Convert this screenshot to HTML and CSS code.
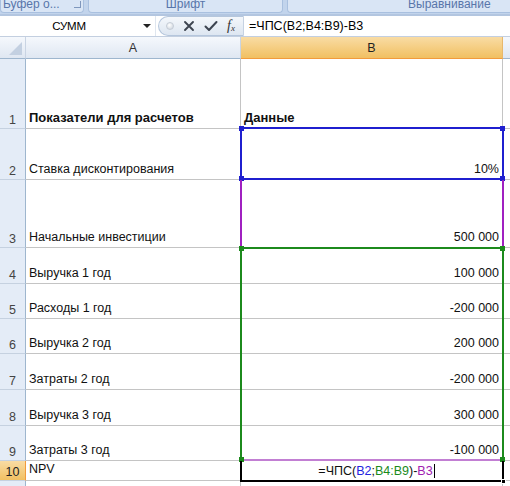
FILE: index.html
```html
<!DOCTYPE html>
<html>
<head>
<meta charset="utf-8">
<link rel="stylesheet" href="styles.css">
</head>
<body>
<div class="ribbon">
  <div class="grp g1"><span class="glabel">Буфер о...</span><span class="launch"></span></div>
  <div class="grp g2"><span class="glabel">Шрифт</span></div>
  <div class="grp g3"><span class="glabel">Выравнивание</span></div>
</div>
<div class="fbar">
  <div class="namebox"><span class="name">СУММ</span><span class="arrow"></span></div>
  <div class="capsule">
    <span class="dot"></span>
    <svg class="ico" width="12" height="12" viewBox="0 0 12 12"><path d="M2 2 L10 10 M10 2 L2 10" stroke="#3d4450" stroke-width="1.9" stroke-linecap="round"/></svg>
    <svg class="ico" width="14" height="12" viewBox="0 0 14 12"><path d="M1.5 6.5 L5 10 L12.5 2" stroke="#3d4450" stroke-width="2" fill="none" stroke-linecap="round" stroke-linejoin="round"/></svg>
    <span class="fx">f<sub>x</sub></span>
  </div>
  <div class="formula">=ЧПС(B2;B4:B9)-B3</div>
</div>
<div class="wrap">
  <div class="sheet grid">
    <div class="corner"><span class="tri"></span></div>
    <div class="ch">A</div>
    <div class="ch sel">B</div>
    <div class="ch rest"></div>

    <div class="rh">1</div><div class="c bold">Показатели для расчетов</div><div class="c bold">Данные</div><div class="x"></div>
    <div class="rh">2</div><div class="c">Ставка дисконтирования</div><div class="c num">10%</div><div class="x"></div>
    <div class="rh">3</div><div class="c">Начальные инвестиции</div><div class="c num">500 000</div><div class="x"></div>
    <div class="rh">4</div><div class="c">Выручка 1 год</div><div class="c num">100 000</div><div class="x"></div>
    <div class="rh">5</div><div class="c">Расходы 1 год</div><div class="c num">-200 000</div><div class="x"></div>
    <div class="rh">6</div><div class="c">Выручка 2 год</div><div class="c num">200 000</div><div class="x"></div>
    <div class="rh">7</div><div class="c">Затраты 2 год</div><div class="c num">-200 000</div><div class="x"></div>
    <div class="rh">8</div><div class="c">Выручка 3 год</div><div class="c num">300 000</div><div class="x"></div>
    <div class="rh">9</div><div class="c">Затраты 3 год</div><div class="c num">-100 000</div><div class="x"></div>
    <div class="rh sel">10</div><div class="c top">NPV</div><div class="c edit"><span>=ЧПС(<b class="cb">B2</b>;<b class="cg">B4:B9</b>)-<b class="cp">B3</b></span><span class="caret"></span></div><div class="x"></div>
    <div class="rh"></div><div class="c"></div><div class="c"></div><div class="x"></div>
  </div>
  <div class="overlay grid">
    <div class="rng r-blue"><i class="h tl"></i><i class="h tr"></i><i class="h bl"></i><i class="h br"></i></div>
    <div class="rng r-purple"><i class="h bl"></i><i class="h br"></i></div>
    <div class="rng r-green"><i class="h tl"></i><i class="h tr"></i><i class="h bl"></i><i class="h br"></i></div>
    <div class="rng r-active"><i class="fill"></i></div>
  </div>
</div>
</body>
</html>
```
FILE: styles.css
```css
* { box-sizing: border-box; }
html, body { margin: 0; padding: 0; background: #fff; }
body {
  width: 510px; height: 486px; overflow: hidden;
  font-family: "Liberation Sans", Arial, sans-serif; font-size: 12.5px; color: #000;
}
.ribbon {
  height: 16px; background: #c2d4ec; display: flex; gap: 4px;
  border-bottom: 2px solid #b3c6e0; overflow: hidden;
}
.grp {
  height: 13px; background: #d9e5f5; border: 1px solid #a9c0df; border-top: none;
  border-radius: 0 0 4px 4px; display: flex; justify-content: center;
  overflow: hidden;
}
.g1 { width: 84px; justify-content: flex-start; padding-left: 2px; }
.g2 { width: 195px; }
.g3 { flex: 1; margin-right: -4px; padding-left: 120px; justify-content: flex-start; }
.glabel {
  font-size: 12px; color: #5876aa; line-height: 13px; margin-top: -2px; white-space: nowrap;
}
.launch {
  width: 7px; height: 7px; border-right: 1px solid #7f97bd; border-bottom: 1px solid #7f97bd;
  margin: 1px 0 0 14px;
}
.fbar {
  height: 21px; display: flex; align-items: center; background: #fff;
  border-bottom: 1px solid #c3cfe0;
}
.namebox {
  width: 156px; height: 20px; display: flex; align-items: center;
  border-right: 1px solid #dfe6ef;
}
.name { width: 140px; text-align: center; font-size: 11.5px; letter-spacing: -0.2px; padding-right: 2px; }
.arrow {
  width: 0; height: 0; border-left: 4px solid transparent; border-right: 4px solid transparent;
  border-top: 4px solid #222; margin-left: 3px;
}
.capsule {
  width: 86px; height: 20px; border-radius: 10px 0 0 10px;
  background: linear-gradient(#f4f7fb, #dde6f1); border: 1px solid #b5c6dc; border-right: 1px solid #c6d2e2;
  display: flex; align-items: center; padding-left: 7px; gap: 9px; margin-left: 2px;
}
.dot { width: 8px; height: 8px; border-radius: 50%; background: radial-gradient(circle at 40% 35%, #ffffff, #c8d0da); border: 1px solid #c5ccd6; }
.ico { display: block; }
.fx { font-family: "Liberation Serif", serif; font-style: italic; font-size: 14px; color: #333; line-height: 14px; }
.fx sub { font-size: 9px; vertical-align: baseline; position: relative; top: 1px; }
.formula { padding-left: 5px; font-size: 12.5px; }

.wrap { position: relative; }
.grid {
  display: grid;
  grid-template-columns: 26px 215px 262px 7px;
  grid-template-rows: 22px 70px 51px 68px 36px 35px 35px 36px 36px 35px 20px 10px;
}
.overlay { position: absolute; left: 0; top: 0; right: 0; pointer-events: none; }
.corner, .ch { background: linear-gradient(#f5f8fc, #dfe7f2); color: #333; }
.corner { border-right: 1px solid #c9d4e3; border-bottom: 1px solid #9eb6ce; position: relative; }
.tri {
  position: absolute; right: 3px; bottom: 3px; width: 0; height: 0;
  border-left: 13px solid transparent; border-bottom: 13px solid #c3d0e1;
}
.ch {
  display: flex; align-items: center; justify-content: center;
  border-right: 1px solid #c9d4e3; border-bottom: 1px solid #9eb6ce; font-size: 12.5px;
}
.ch.sel { background: linear-gradient(#f9dca4, #f1c062); border-bottom: 1px solid #f29b3c; border-right-color: #e8b86b; color: #222; }
.ch.rest { border-right: none; }
.rh {
  background: #e4ecf7; border-right: 1px solid #9eb6ce; border-bottom: 1px solid #c5d1e0;
  display: flex; align-items: flex-end; justify-content: center; padding-bottom: 1px;
  font-size: 12.5px; color: #444;
}
.rh.sel { background: linear-gradient(#f9dca4, #f1c062); border-right-color: #f29b3c; color: #222; }
.c {
  border-right: 1px solid #c4c4c4; border-bottom: 1px solid #c4c4c4;
  display: flex; align-items: flex-end; padding: 0 3px 3px 3px; white-space: nowrap;
  font-size: 12.5px; color: #111; overflow: hidden;
}
.c.bold { font-weight: bold; font-size: 13px; }
.c.num { justify-content: flex-end; padding-right: 3px; }
.c.top { align-items: flex-start; padding-top: 1px; }
.c.edit { justify-content: center; align-items: center; padding: 0 0 0 10px; }
.caret { width: 1px; height: 14px; background: #000; margin-left: 1px; }
.edit b { font-weight: normal; }
.cb { color: #2323e0; }
.cg { color: #1b8a1b; }
.cp { color: #a020b0; }
.x { border-bottom: 1px solid #c4c4c4; background: #fff; }

.rng { position: relative; grid-column: 3; margin: -1px -1px 0 -1px; }
.r-blue { grid-row: 3; border: 2px solid #1f1fcf; margin-top: -2px; }
.r-purple { grid-row: 4; border-left: 2px solid #a020c0; border-right: 2px solid #a020c0; margin-top: 0; }
.r-green { grid-row: 5 / 11; border: 2px solid #1c8a1c; border-bottom-color: #c27fd3; margin-top: -1px; }
.r-active { grid-row: 11; border: 2px solid #000; border-top: none; margin: 0 -1px -1px -1px; }
.h { position: absolute; width: 5px; height: 5px; }
.r-blue .h { background: #1f1fcf; }
.r-purple .h { background: #a020c0; }
.r-green .h { background: #1c8a1c; }
.tl { left: -3px; top: -3px; }
.tr { right: -3px; top: -3px; }
.bl { left: -3px; bottom: -3px; }
.br { right: -3px; bottom: -3px; }
.fill { position: absolute; right: -4px; bottom: -4px; width: 5px; height: 5px; background: #000; border: 1px solid #fff; }
```
